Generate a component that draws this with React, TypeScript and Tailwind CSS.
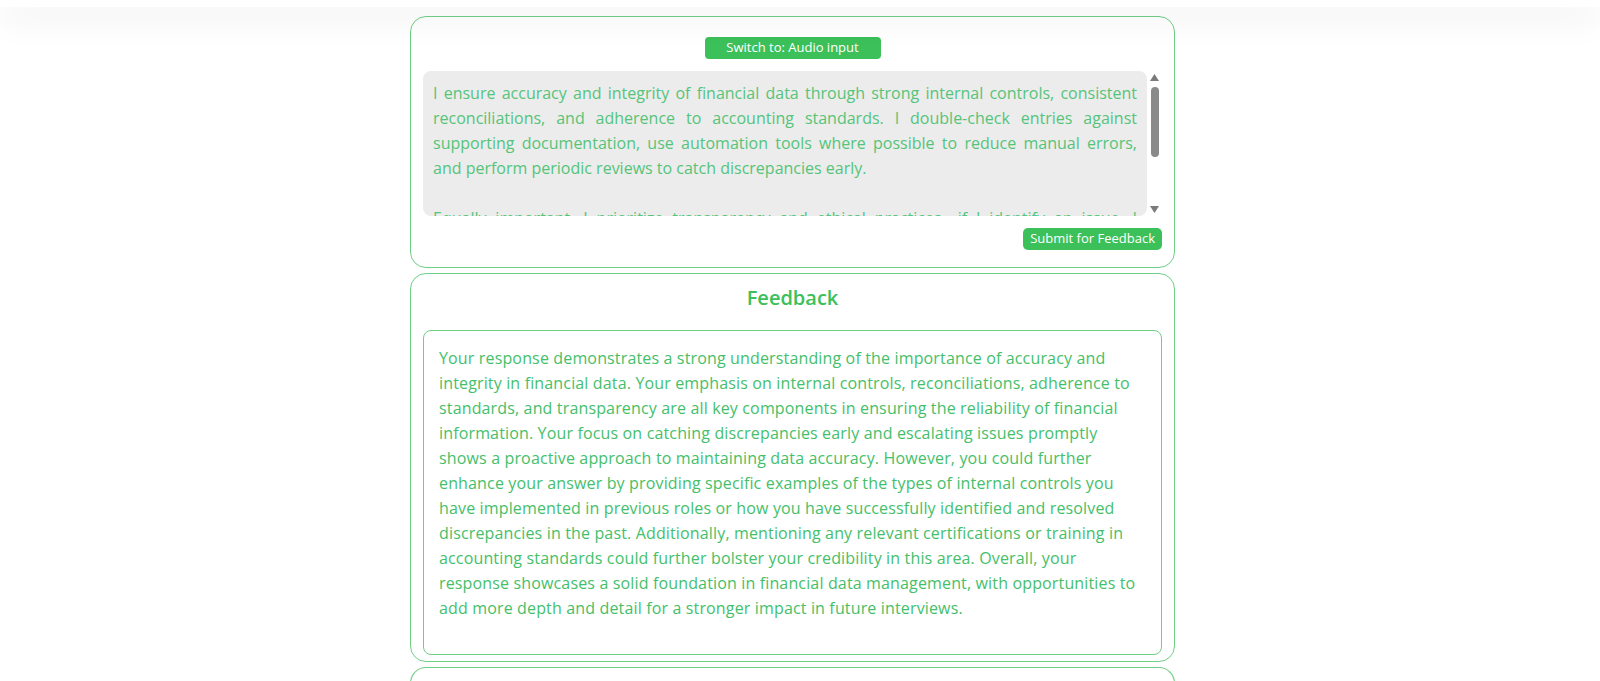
import React from 'react';

const answer = `I ensure accuracy and integrity of financial data through strong internal controls, consistent reconciliations, and adherence to accounting standards. I double-check entries against supporting documentation, use automation tools where possible to reduce manual errors, and perform periodic reviews to catch discrepancies early.

Equally important, I prioritize transparency and ethical practices—if I identify an issue, I escalate it promptly and work with the relevant teams to resolve it before it impacts reporting.`;

const feedback =
  'Your response demonstrates a strong understanding of the importance of accuracy and integrity in financial data. Your emphasis on internal controls, reconciliations, adherence to standards, and transparency are all key components in ensuring the reliability of financial information. Your focus on catching discrepancies early and escalating issues promptly shows a proactive approach to maintaining data accuracy. However, you could further enhance your answer by providing specific examples of the types of internal controls you have implemented in previous roles or how you have successfully identified and resolved discrepancies in the past. Additionally, mentioning any relevant certifications or training in accounting standards could further bolster your credibility in this area. Overall, your response showcases a solid foundation in financial data management, with opportunities to add more depth and detail for a stronger impact in future interviews.';

const ScrollBar: React.FC = () => (
  <div className="flex w-[15px] flex-col items-center bg-white py-[3px]">
    <svg width="9" height="7" viewBox="0 0 9 7">
      <path d="M4.5 0 L9 7 L0 7 Z" fill="#7a7a7a" />
    </svg>
    <div className="mt-[6px] h-[70px] w-[8px] rounded-full bg-[#8a8a8a]" />
    <div className="flex-1" />
    <svg width="9" height="7" viewBox="0 0 9 7">
      <path d="M0 0 L9 0 L4.5 7 Z" fill="#7a7a7a" />
    </svg>
  </div>
);

export default function App() {
  return (
    <div className="h-screen overflow-hidden bg-white font-['Open_Sans',_sans-serif]">
      <div className="relative z-10 h-[7px] bg-white shadow-[0_10px_32px_rgba(0,0,0,0.14)]" />
      <div className="flex flex-col items-center pt-[9px] pr-[15px]">
        <div className="flex w-[765px] flex-col gap-[5px]">
          {/* answer card */}
          <div className="flex flex-col rounded-2xl border border-[#6fcf87] px-[12px] pt-[20px] pb-[17px]">
            <div className="flex justify-center">
              <button className="h-[22px] w-[176px] rounded-[4px] bg-[#3cc05a] text-[13px] text-white">
                Switch to: Audio input
              </button>
            </div>
            <div className="mt-[12px] flex h-[145px]">
              <div className="flex-1 overflow-hidden rounded-lg bg-[#ececec] px-[10px] pt-[10px]">
                <p className="whitespace-pre-wrap text-justify text-[16px] leading-[25px] text-[#55c47a]">
                  {answer}
                </p>
              </div>
              <ScrollBar />
            </div>
            <div className="mt-[12px] flex justify-end">
              <button className="h-[22px] rounded-[5px] bg-[#3cc05a] px-[7px] text-[13px] text-white">
                Submit for Feedback
              </button>
            </div>
          </div>

          {/* feedback card */}
          <div className="flex flex-col rounded-2xl border border-[#6fcf87] px-[12px] pt-[10px] pb-[6px]">
            <h2 className="text-center text-[20px] leading-[28px] font-semibold text-[#3cc05a]">Feedback</h2>
            <div className="mt-[18px] rounded-lg border border-[#6fcf87] px-[15px] pt-[15px] pb-[33px]">
              <p className="text-[16px] leading-[25px] tracking-[0.15px] text-[#45c06a]">{feedback}</p>
            </div>
          </div>

          {/* next card (cut off) */}
          <div className="h-[40px] rounded-t-2xl border border-b-0 border-[#6fcf87]" />
        </div>
      </div>
    </div>
  );
}
